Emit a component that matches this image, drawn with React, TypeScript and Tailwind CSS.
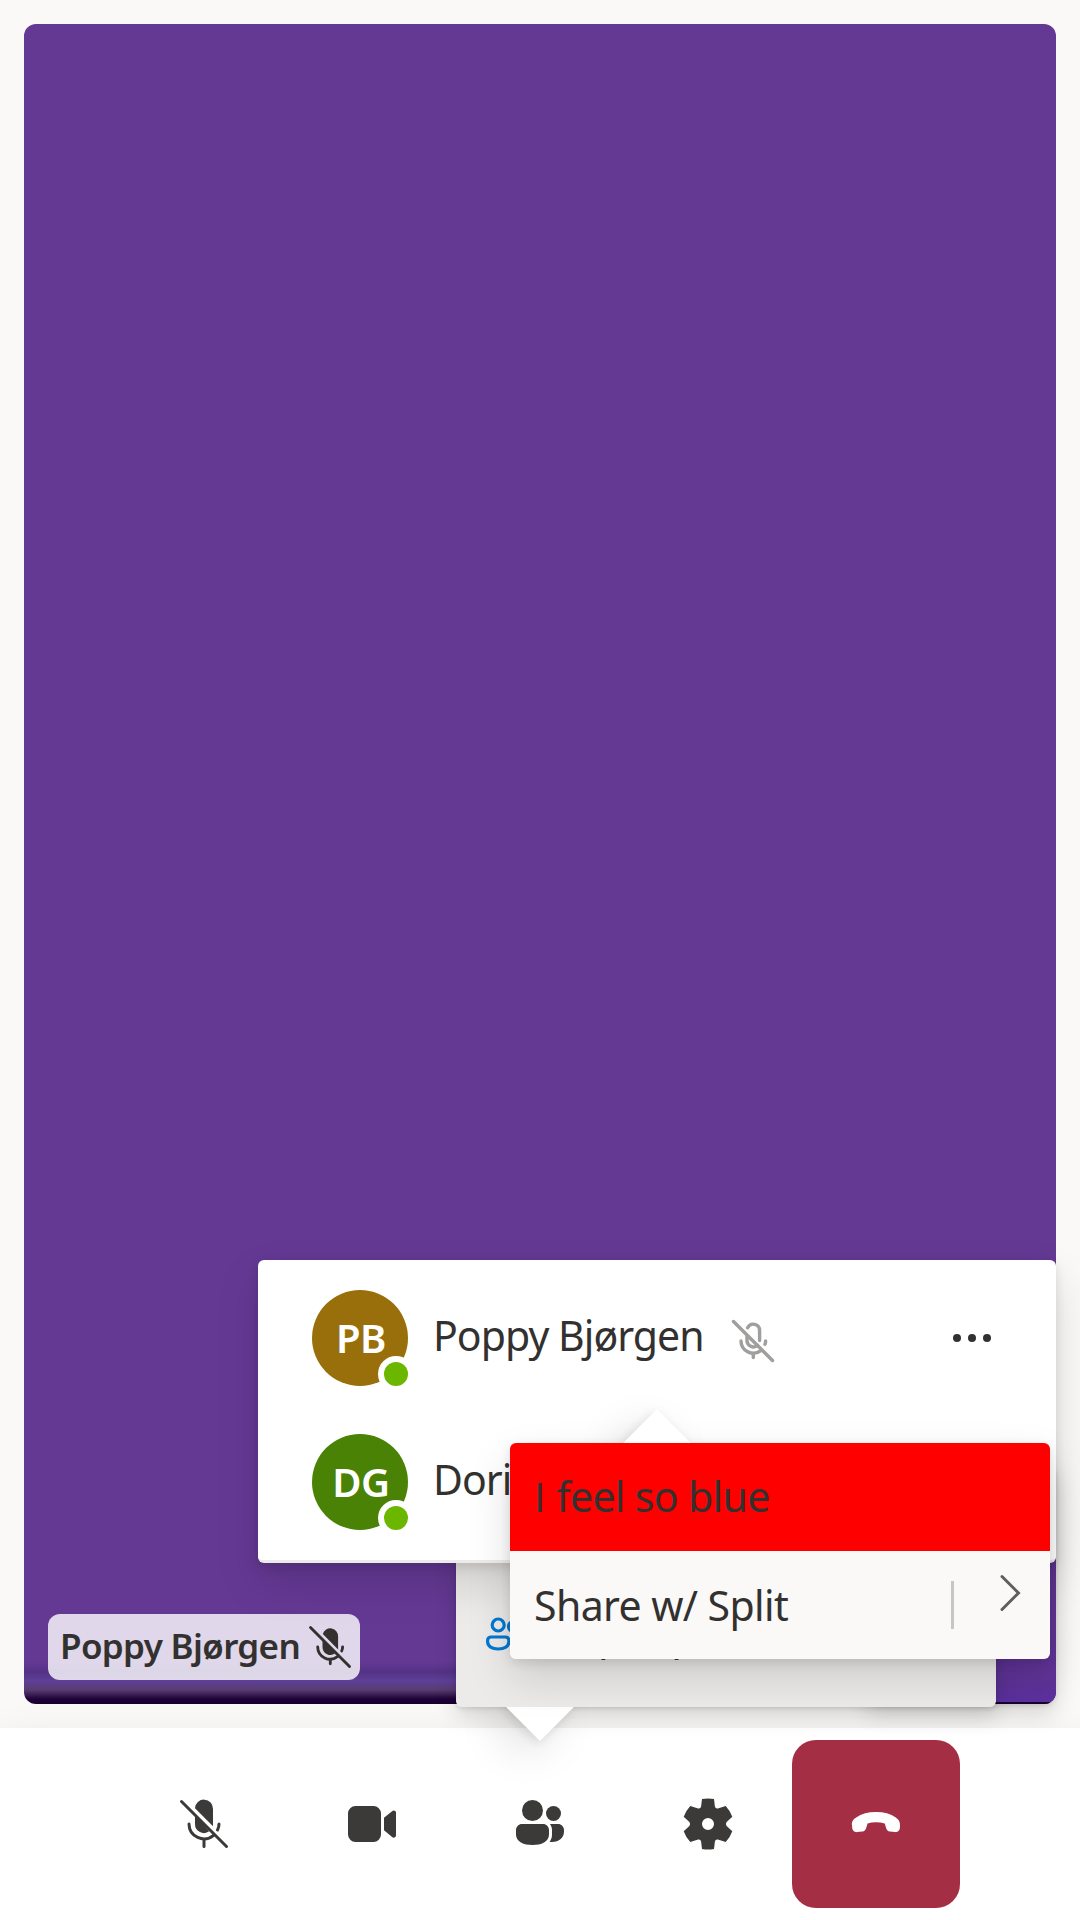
import React from "react";

const FONT = "font-['Noto_Sans','Open_Sans',sans-serif]";
const DEPTH = "shadow-[0_19.2px_43.2px_rgba(0,0,0,0.132),0_3.6px_10.8px_rgba(0,0,0,0.108)]";

function Beak({ className }: { className: string }) {
  return <span className={`absolute h-12 w-12 rotate-45 bg-white ${DEPTH} ${className}`} />;
}

function MicOff({ className }: { className: string }) {
  return (
    <svg viewBox="0 0 16 16" className={className} fill="currentColor">
      <path d="M5.5 5.500v2.500a2.600 2.600 0 0 0 4.300 2Z" />
      <path d="M5.600 3.700A2.600 2.600 0 0 1 10.700 4.600v4.200Z" />
      <path d="M3.900 8a4.100 4.100 0 0 0 6.600 3.200M12.200 8q0 .7-.3 1.300M8.100 12.200v1.400M1.500 1.500l13 13" fill="none" stroke="currentColor" strokeWidth="0.95" strokeLinecap="round" />
    </svg>
  );
}

function ToolbarMicOff({ className }: { className: string }) {
  return (
    <svg viewBox="0 0 20 20" className={className} fill="currentColor">
      <path d="M7 7V10a3 3 0 0 0 4.750 2.450L7 7Z" />
      <path d="M7 4.750A3 3 0 0 1 13 5v5.750Z" />
      <path d="M5 10a5 5 0 0 0 8.200 3.800M15 10q0 1-.5 2M10 15v2.500M2.500 2.500l15 15" fill="none" stroke="currentColor" strokeLinecap="round" />
    </svg>
  );
}

function MicOffOutline({ className }: { className: string }) {
  return (
    <svg viewBox="0 0 16 16" className={className} fill="none" stroke="currentColor" strokeWidth="1.15" strokeLinecap="round">
      <path d="M1.500 1.500l13 13M6.200 3.600A2.100 2.100 0 0 1 10.200 4.500v3.300M6 6v1.800a2.100 2.100 0 0 0 3.500 1.600M4 8a4.100 4.100 0 0 0 6.600 3.200M12.200 8q0 .7-.2 1.100M8.100 12.200v1.300" />
    </svg>
  );
}

function Person({ initials, name, color, muted }: { initials: string; name: string; color: string; muted?: boolean }) {
  return (
    <div className="flex h-36 items-center pl-[54px] pr-[65px]">
      <div className={`relative flex h-24 w-24 items-center justify-center rounded-full ${color}`}>
        <span className="ml-0.5 text-[40px] font-semibold leading-none tracking-[-0.4px] text-white">{initials}</span>
        <span className="absolute -bottom-1.5 -right-1.5 h-9 w-9 rounded-full border-[6px] border-white bg-[#6bb700]" />
      </div>
      <span className="-mt-1.5 ml-[25px] w-[277px] whitespace-nowrap text-[41px] leading-[56px] tracking-[-0.95px]">{name}</span>
      {muted && <MicOffOutline className="ml-[19px] mt-1.5 h-12 w-12 text-[#a19f9d]" />}
      {muted && (
        <div className="ml-auto flex gap-[7px]">
          <i className="h-2 w-2 rounded-full bg-[#323130]" />
          <i className="h-2 w-2 rounded-full bg-[#323130]" />
          <i className="h-2 w-2 rounded-full bg-[#323130]" />
        </div>
      )}
    </div>
  );
}

export default function App() {
  return (
    <div className={`relative flex h-[1920px] w-[1080px] flex-col overflow-hidden bg-[#faf9f8] text-[#323130] ${FONT}`}>
      <main className="flex h-[1728px] p-6">
        <section className="relative flex flex-1 items-end rounded-xl bg-[linear-gradient(to_bottom,#643994_0,#643994_1638px,#533285_1648px,#5f3f98_1657px,#573c70_1666px,#1f0138_1675px,#18002e_1680px)] p-6">
          <div className="flex h-[66px] w-[312px] items-center rounded-xl bg-white/80 pl-3">
            <span className="-mt-0.5 w-[242px] whitespace-nowrap text-[35px] font-semibold tracking-[-0.65px]">Poppy Bjørgen</span>
            <MicOff className="ml-1 h-12 w-12 shrink-0" />
          </div>
          <div className="absolute bottom-0 right-0 flex h-60 w-48 flex-col justify-end overflow-hidden rounded-xl bg-[linear-gradient(to_bottom,#643994,#5f3397_90%,#5a30a0)] shadow-[0_9.6px_21.6px_rgba(0,0,0,0.132),0_1.8px_5.4px_rgba(0,0,0,0.108)]">
            <div className="h-0.5 bg-[#18002e]" />
          </div>
        </section>
      </main>

      <footer className="flex h-48 items-center justify-center bg-white text-[#3b3a39] shadow-[0_19.2px_43.2px_rgba(0,0,0,0.132)]">
        <div className="flex h-[168px] w-[168px] items-center justify-center"><ToolbarMicOff className="h-[60px] w-[60px]" /></div>
        <div className="flex h-[168px] w-[168px] items-center justify-center">
          <svg viewBox="0 0 20 20" className="h-[60px] w-[60px]" fill="currentColor"><path d="M5 4h5.500A2.500 2.500 0 0 1 13 6.500v7a2.500 2.500 0 0 1-2.500 2.500H4.500A2.500 2.500 0 0 1 2 13.500v-7A2.500 2.500 0 0 1 4.500 4ZM14 7.930l2.700-2.200c.5-.5 1.300-.1 1.300.4v7.700c0 .6-.8 1-1.300.5L14 12.100Z" /></svg>
        </div>
        <div className="flex h-[168px] w-[168px] items-center justify-center">
          <svg viewBox="0 0 20 20" className="h-[60px] w-[60px]" fill="currentColor"><circle cx="7.500" cy="5.500" r="3.500" /><circle cx="14.500" cy="6.500" r="2.500" /><path d="M4 10h7c1.100 0 2 .9 2 2v1.500C13 16 10.400 17 7.500 17S2 16 2 13.500V12c0-1.100.9-2 2-2Zm9.200 6c.5-.7.8-1.500.8-2.500V12c0-.8-.3-1.500-.7-2H16c1.100 0 2 .9 2 2v.5c0 2.100-1.600 3.500-4 3.500Z" /></svg>
        </div>
        <div className="flex h-[168px] w-[168px] items-center justify-center">
          <svg viewBox="0 0 20 20" className="h-[60px] w-[60px]" fill="currentColor" fillRule="evenodd"><path d="M8 1.700Q10 1.300 12 1.700L12.300 4.200Q12.500 5 13.300 4.800L15.900 4Q17.400 5.600 18.100 7.600L16.200 9.300Q15.700 10 16.200 10.700L18.100 12.400Q17.400 14.400 15.900 16L13.300 15.200Q12.500 15 12.300 15.800L12 18.300Q10 18.700 8 18.300L7.700 15.800Q7.500 15 6.700 15.200L4.100 16Q2.600 14.400 1.900 12.400L3.800 10.700Q4.300 10 3.800 9.300L1.900 7.600Q2.600 5.600 4.100 4L6.700 4.800Q7.500 5 7.700 4.200ZM10 8a2 2 0 1 0 0 4 2 2 0 0 0 0-4Z" /></svg>
        </div>
        <div className="flex h-[168px] w-[168px] items-center justify-center rounded-3xl bg-[#a42e43] text-white">
          <svg viewBox="0 0 20 20" className="h-[60px] w-[60px]" fill="currentColor"><path d="m18 10.800-.1.900c-.2.700-.8 1.100-1.500 1l-1.800-.2c-.6-.1-1-.5-1.200-1.100l-.5-1.600Q11.600 9.400 10 9.400T7.200 9.800l-.5 1.600c-.2.600-.6 1-1.200 1.100l-1.800.2c-.8.1-1.400-.4-1.600-1.100L2 10.500c-.2-1.300.3-2 1.400-2.700Q6 6 10 6t6.600 1.800c1.100.8 1.500 1.600 1.400 3Z" /></svg>
        </div>
      </footer>

      <div className="absolute left-[456px] top-[1500px] h-[207px] w-[540px] rounded-md shadow-[0_9.6px_21.6px_rgba(0,0,0,0.132),0_1.8px_5.4px_rgba(0,0,0,0.108)]">
        <Beak className="-bottom-6 left-[60px]" />
        <div className="relative flex h-full items-center rounded-md bg-[#edebe9] pl-6">
          <svg viewBox="0 0 48 48" className="mt-[60px] h-12 w-12 text-[#0078d4]" fill="none" stroke="currentColor" strokeWidth="3.2"><circle cx="18.200" cy="15" r="6" /><circle cx="33.500" cy="16.500" r="5" /><path d="M11 27h14.500a3.400 3.400 0 0 1 3.400 3.400v1.200c0 5-4.600 7.400-10.700 7.400S7.600 36.600 7.600 31.600v-1.200A3.400 3.400 0 0 1 11 27ZM32 38c5 0 9-2 9-6.500V30a3 3 0 0 0-3-3h-5" /></svg>
          <span className="ml-9 mt-[63px] whitespace-nowrap text-[41px]">2 people</span>
        </div>
      </div>

      <div className={`absolute left-[258px] top-[1260px] h-[303px] w-[798px] rounded-md border-b-[3px] border-[#edebe9] bg-white py-1.5 ${DEPTH}`}>
        <Person initials="PB" name="Poppy Bjørgen" color="bg-[#986f0b]" muted />
        <Person initials="DG" name="Doris Gutierrez" color="bg-[#498205]" />
      </div>

      <div className={`absolute left-[510px] top-[1443px] h-[216px] w-[540px] rounded-md ${DEPTH}`}>
        <Beak className="-top-6 left-[123px]" />
        <div className="relative overflow-hidden rounded-md">
          <div className="flex h-[108px] items-center bg-[red] px-6">
            <span className="text-[41px] tracking-[-0.65px]"><span className="font-['Open_Sans',sans-serif] tracking-[1px]">I</span> feel so blue</span>
          </div>
          <div className="flex h-[108px] items-center bg-[#faf9f8] pl-6">
            <span className="mt-px text-[41px] tracking-[-0.6px]">Share w/ Split</span>
            <span className="ml-auto h-12 w-[3px] bg-[#c8c6c4]" />
            <svg viewBox="0 0 24 42" className="-mt-6 ml-[44px] mr-[28px] h-[42px] w-6 text-[#605e5c]" fill="none" stroke="currentColor" strokeWidth="3" strokeLinecap="round"><path d="M4 4.500L20.500 21L4 37.500" /></svg>
          </div>
        </div>
      </div>
    </div>
  );
}
